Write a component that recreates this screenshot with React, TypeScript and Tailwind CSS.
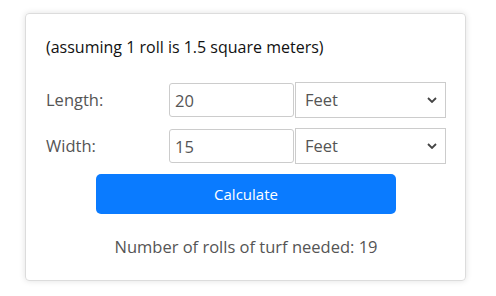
import React from "react";

export default function App() {
  return (
    <div className="w-[496px] h-[296px] bg-white pt-[13px] pl-[25px]" style={{ fontFamily: "'Open Sans', 'Noto Sans', sans-serif" }}>
      <div className="w-[441px] h-[268px] rounded-[4px] border border-[#dcdcdc] shadow-[0_0_6px_rgba(0,0,0,0.12)] pl-[20px] pr-[19px] pt-[23px]">
        <div className="text-[16px] text-[#111] font-medium leading-[20px]">(assuming 1 roll is 1.5 square meters)</div>
        <div className="mt-[25px] flex items-center h-[36px]">
          <div className="w-[123px] text-[16.5px] text-[#555]">Length:</div>
          <input defaultValue="20" className="w-[125px] h-[34px] border border-[#ccc] rounded-[3px] px-[5px] text-[16.5px] text-[#555] outline-none" />
          <div className="ml-[1px] w-[151px] h-[36px] border border-[#ccc] flex items-center justify-between pl-[9px] pr-[8px] text-[16.5px] text-[#555]">
            <span>Feet</span>
            <svg width="10" height="6" viewBox="0 0 10 6"><path d="M1 1l4 4 4-4" stroke="#444" strokeWidth="1.8" fill="none" /></svg>
          </div>
        </div>
        <div className="mt-[10px] flex items-center h-[36px]">
          <div className="w-[123px] text-[16.5px] text-[#555]">Width:</div>
          <input defaultValue="15" className="w-[125px] h-[34px] border border-[#ccc] rounded-[3px] px-[5px] text-[16.5px] text-[#555] outline-none" />
          <div className="ml-[1px] w-[151px] h-[36px] border border-[#ccc] flex items-center justify-between pl-[9px] pr-[8px] text-[16.5px] text-[#555]">
            <span>Feet</span>
            <svg width="10" height="6" viewBox="0 0 10 6"><path d="M1 1l4 4 4-4" stroke="#444" strokeWidth="1.8" fill="none" /></svg>
          </div>
        </div>
        <div className="mt-[10px] flex justify-center">
          <button className="w-[300px] h-[40px] rounded-[5px] bg-[#0a7bff] text-white text-[15px]">Calculate</button>
        </div>
        <div className="mt-[21px] text-center text-[16.5px] text-[#555]">Number of rolls of turf needed: 19</div>
      </div>
    </div>
  );
}
